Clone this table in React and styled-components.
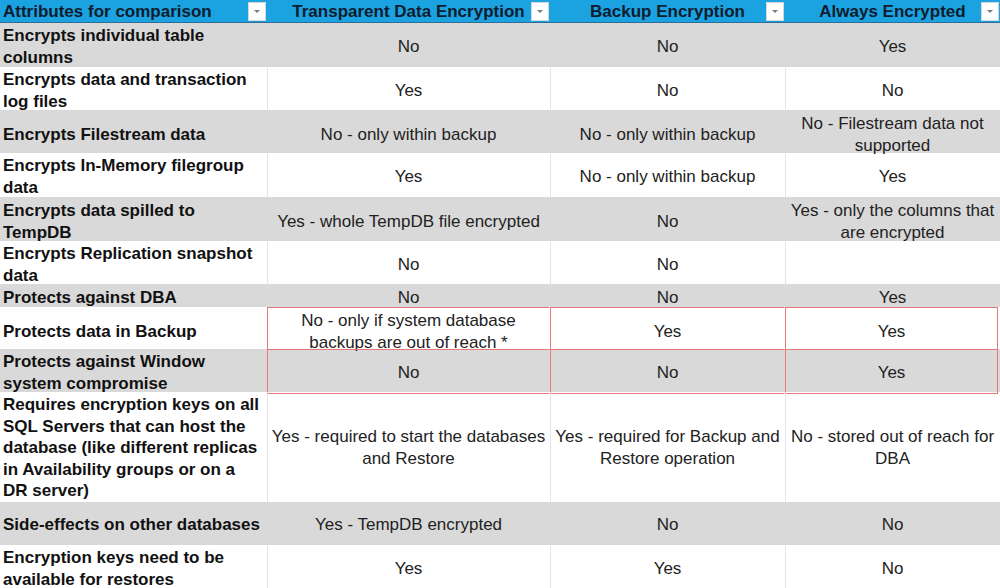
import styled, { createGlobalStyle } from "styled-components";

const GlobalStyle = createGlobalStyle`
  * { box-sizing: border-box; }
  html, body { margin: 0; padding: 0; background: #ffffff; }
  body { font-family: "Liberation Sans", Arial, sans-serif; }
`;

const COLS = "267px 283px 235px 215px";
const RED = "#e6787b";

const Sheet = styled.div`
  width: 1000px;
  height: 588px;
  overflow: hidden;
  font-family: "Liberation Sans", Arial, sans-serif;
`;

const HeadRow = styled.div`
  display: grid;
  grid-template-columns: ${COLS};
  height: 23px;
  background: #1ba2e0;
  border-bottom: 1px solid #2f6d94;
`;

const HeadCell = styled.div`
  position: relative;
  display: flex;
  align-items: center;
  justify-content: ${(p) => (p.$left ? "flex-start" : "center")};
  padding-left: ${(p) => (p.$left ? "3px" : "0")};
  padding-top: 2px;
  font-size: 17px;
  font-weight: bold;
  color: #0f1c2e;
  white-space: nowrap;
`;

// excel style filter button, sits over the header cell
const FilterBtn = styled.span`
  position: absolute;
  right: 1px;
  top: 2px;
  width: 18px;
  height: 19px;
  background: #ffffff;
  border: 1px solid #d6d6d6;

  &::after {
    content: "";
    position: absolute;
    left: 5px;
    top: 7px;
    border-left: 3px solid transparent;
    border-right: 3px solid transparent;
    border-top: 3px solid #7a7a7a;
  }
`;

const Row = styled.div`
  display: grid;
  grid-template-columns: ${COLS};
  height: ${(p) => p.$h}px;
  background: ${(p) => (p.$gray ? "#d9d9d9" : "#ffffff")};
`;

const Label = styled.div`
  display: flex;
  align-items: center;
  padding: 2px 0 0 3px;
  font-size: 17px;
  line-height: 21.6px;
  font-weight: bold;
  color: #111111;
  white-space: pre-line;
`;

const Cell = styled.div`
  display: flex;
  align-items: center;
  justify-content: center;
  padding-top: 2px;
  text-align: center;
  font-size: 17px;
  line-height: 21.6px;
  color: #222222;
  white-space: pre-line;
  border-left: 1px solid
    ${(p) => (p.$red ? RED : p.$gray ? "transparent" : "#e4e4e4")};
  border-top: 1px solid ${(p) => (p.$red ? RED : "transparent")};
  border-bottom: 1px solid
    ${(p) => (p.$red && p.$bottom ? RED : "transparent")};
  border-right: 1px solid
    ${(p) => (p.$red && p.$last ? RED : "transparent")};
  margin-right: ${(p) => (p.$red && p.$last ? "2px" : "0")};
`;

const headers = [
  "Attributes for comparison",
  "Transparent Data Encryption",
  "Backup Encryption",
  "Always Encrypted",
];

const rows = [
  { h: 44, label: "Encrypts individual table\ncolumns", v: ["No", "No", "Yes"] },
  { h: 43, label: "Encrypts data and transaction\nlog files", v: ["Yes", "No", "No"] },
  {
    h: 43,
    label: "Encrypts Filestream data",
    v: ["No - only within backup", "No - only within backup", "No - Filestream data not\nsupported"],
  },
  {
    h: 44,
    label: "Encrypts In-Memory filegroup\ndata",
    v: ["Yes", "No - only within backup", "Yes"],
  },
  {
    h: 44,
    label: "Encrypts data spilled to\nTempDB",
    v: ["Yes - whole TempDB file encrypted", "No", "Yes - only the columns that\nare encrypted"],
  },
  { h: 43, label: "Encrypts Replication snapshot\ndata", v: ["No", "No", ""] },
  { h: 23, label: "Protects against DBA", v: ["No", "No", "Yes"] },
  {
    h: 42,
    label: "Protects data in Backup",
    v: ["No - only if system database\nbackups are out of reach *", "Yes", "Yes"],
    red: true,
  },
  {
    h: 43,
    label: "Protects against Window\nsystem compromise",
    v: ["No", "No", "Yes"],
    red: true,
    bottom: true,
  },
  {
    h: 110,
    label:
      "Requires encryption keys on all\nSQL Servers that can host the\ndatabase (like different replicas\nin Availability groups or on a\nDR server)",
    v: [
      "Yes - required to start the databases\nand Restore",
      "Yes - required for Backup and\nRestore operation",
      "No - stored out of reach for\nDBA",
    ],
  },
  {
    h: 43,
    label: "Side-effects on other databases",
    v: ["Yes - TempDB encrypted", "No", "No"],
  },
  {
    h: 43,
    label: "Encryption keys need to be\navailable for restores",
    v: ["Yes", "Yes", "No"],
  },
];

export default function App() {
  return (
    <>
      <GlobalStyle />
      <Sheet>
        <HeadRow>
          {headers.map((t, i) => (
            <HeadCell key={i} $left={i === 0}>
              {t}
              <FilterBtn />
            </HeadCell>
          ))}
        </HeadRow>
        {rows.map((r, i) => {
          const gray = i % 2 === 0;
          return (
            <Row key={i} $h={r.h} $gray={gray}>
              <Label>{r.label}</Label>
              {r.v.map((val, j) => (
                <Cell
                  key={j}
                  $gray={gray}
                  $red={r.red}
                  $bottom={r.bottom}
                  $last={j === 2}
                >
                  {val}
                </Cell>
              ))}
            </Row>
          );
        })}
      </Sheet>
    </>
  );
}
